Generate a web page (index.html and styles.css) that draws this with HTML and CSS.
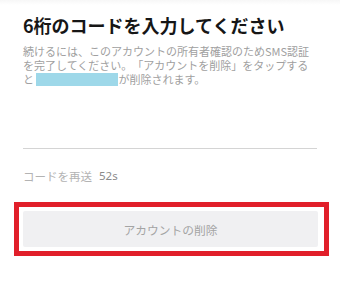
FILE: index.html
```html
<!DOCTYPE html>
<html lang="ja">
<head>
<meta charset="utf-8">
<link rel="stylesheet" href="styles.css">
</head>
<body>
<div class="screen">
  <div class="content">
    <h1 class="title">6桁のコードを入力してください</h1>
    <p class="desc">続けるには、このアカウントの所有者確認のためSMS認証を完了してください。「アカウントを削除」をタップする<br>と <span class="masked"></span>が削除されます。</p>
    <div class="code-input"></div>
    <div class="resend"><span class="resend-label">コードを再送</span><span class="timer">52s</span></div>
  </div>
  <div class="highlight">
    <button class="delete-btn">アカウントの削除</button>
  </div>
</div>
</body>
</html>
```

FILE: styles.css
```css
html, body {
  margin: 0;
  padding: 0;
  background: #ffffff;
}
body {
  font-family: "Noto Sans CJK JP", "Noto Sans", sans-serif;
  width: 340px;
  height: 291px;
  overflow: hidden;
  text-spacing-trim: space-all;
}
.screen {
  background: linear-gradient(#f7f7f7, #ffffff 5px);
  height: 291px;
}
.content {
  padding: 13px 23px 0 23px;
}
.title {
  margin: 0;
  font-size: 18px;
  line-height: 24px;
  font-weight: 700;
  color: #161616;
}
.desc {
  margin: 7px 0 0 0;
  font-size: 11px;
  line-height: 14px;
  color: #a0a0a0;
}
.masked {
  display: inline-block;
  width: 82px;
  height: 13px;
  background: #9ed8e9;
  vertical-align: -2px;
}
.code-input {
  height: 62px;
  border-bottom: 1px solid #d4d4d4;
}
.resend {
  margin-top: 19px;
  font-size: 11.5px;
  line-height: 16px;
  display: flex;
  gap: 7px;
}
.resend-label {
  color: #b3b3b3;
}
.timer {
  color: #8a8a8a;
  font-family: "Noto Sans", sans-serif;
}
.highlight {
  margin: 18px 11px 0 14px;
  border: 5px solid #e11f2a;
  padding: 4px 6px 4px 4px;
}
.delete-btn {
  display: block;
  width: 100%;
  height: 36px;
  border: none;
  border-radius: 2px;
  background: #f0f0f2;
  color: #a4a4a4;
  font-family: "Noto Sans CJK JP", "Noto Sans", sans-serif;
  font-size: 11.75px;
  padding: 0;
}
```
